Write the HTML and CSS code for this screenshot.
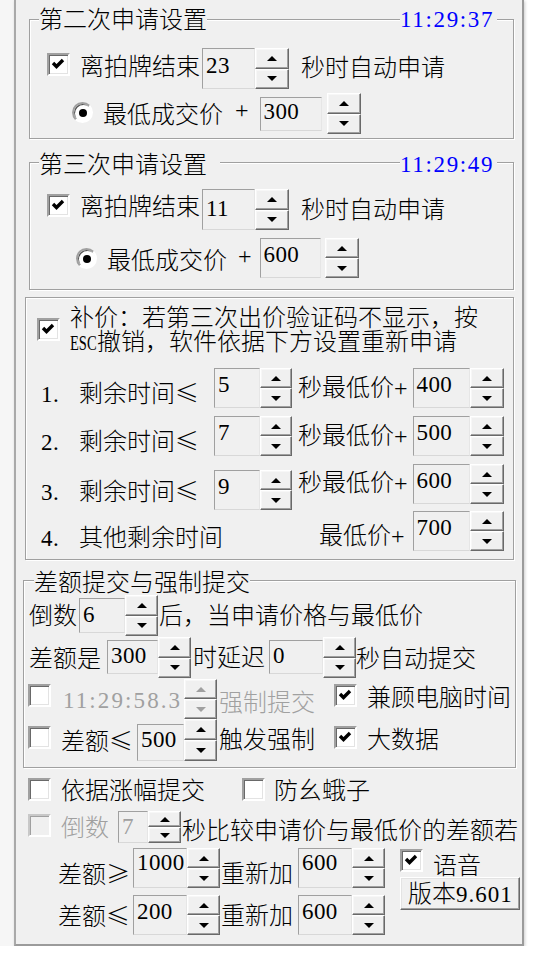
FILE: index.html
```html
<!DOCTYPE html>
<html lang="zh-CN">
<head>
<meta charset="utf-8">
<title>申请设置</title>
<link rel="stylesheet" href="styles.css">
</head>
<body>
<div class="win">
  <section class="grp g1">
    <div class="gh"><span class="gt">第二次申请设置</span><span class="gtime">11:29:37</span></div>
    <div class="row ra g1a">
      <span class="cb"><svg viewBox="0 0 19 19"><polyline points="4,8 7.5,11.5 14,5"/></svg></span>
      <span class="t la">离拍牌结束</span>
      <span class="ed">23</span>
      <span class="sp"><i class="u"></i><i class="d"></i></span>
      <span class="t lb">秒时自动申请</span>
    </div>
    <div class="row rb g1b">
      <span class="rd"></span>
      <span class="t la">最低成交价</span>
      <span class="t plus">+</span>
      <span class="ed">300</span>
      <span class="sp"><i class="u"></i><i class="d"></i></span>
    </div>
  </section>

  <section class="grp g2">
    <div class="gh"><span class="gt">第三次申请设置</span><span class="gtime">11:29:49</span></div>
    <div class="row ra g2a">
      <span class="cb"><svg viewBox="0 0 19 19"><polyline points="4,8 7.5,11.5 14,5"/></svg></span>
      <span class="t la">离拍牌结束</span>
      <span class="ed">11</span>
      <span class="sp"><i class="u"></i><i class="d"></i></span>
      <span class="t lb">秒时自动申请</span>
    </div>
    <div class="row rb g2b">
      <span class="rd"></span>
      <span class="t la">最低成交价</span>
      <span class="t plus">+</span>
      <span class="ed">600</span>
      <span class="sp"><i class="u"></i><i class="d"></i></span>
    </div>
  </section>

  <section class="grp g3">
    <div class="row g3a">
      <span class="cb"><svg viewBox="0 0 19 19"><polyline points="4,8 7.5,11.5 14,5"/></svg></span>
      <div class="txt"><div class="t">补价：若第三次出价验证码不显示，按</div><div class="t"><span class="esc">ESC</span>撤销，软件依据下方设置重新申请</div></div>
    </div>
    <div class="row lr l1">
      <span class="t lbl"><span class="num">1.</span>剩余时间<span class="le">≤</span></span>
      <span class="ed e1">5</span>
      <span class="sp s1"><i class="u"></i><i class="d"></i></span>
      <span class="t lb">秒最低价+</span>
      <span class="ed e2">400</span>
      <span class="sp s2"><i class="u"></i><i class="d"></i></span>
    </div>
    <div class="row lr l2">
      <span class="t lbl"><span class="num">2.</span>剩余时间<span class="le">≤</span></span>
      <span class="ed e1">7</span>
      <span class="sp s1"><i class="u"></i><i class="d"></i></span>
      <span class="t lb">秒最低价+</span>
      <span class="ed e2">500</span>
      <span class="sp s2"><i class="u"></i><i class="d"></i></span>
    </div>
    <div class="row lr l3">
      <span class="t lbl"><span class="num">3.</span>剩余时间<span class="le">≤</span></span>
      <span class="ed e1">9</span>
      <span class="sp s1"><i class="u"></i><i class="d"></i></span>
      <span class="t lb">秒最低价+</span>
      <span class="ed e2">600</span>
      <span class="sp s2"><i class="u"></i><i class="d"></i></span>
    </div>
    <div class="row lr l4">
      <span class="t lbl"><span class="num">4.</span>其他剩余时间</span>
      <span class="t lb">最低价+</span>
      <span class="ed e2">700</span>
      <span class="sp s2"><i class="u"></i><i class="d"></i></span>
    </div>
  </section>

  <section class="grp g4">
    <div class="gh"><span class="gt">差额提交与强制提交</span></div>
    <div class="row g4a">
      <span class="t ta">倒数</span>
      <span class="ed ea">6</span>
      <span class="sp sa"><i class="u"></i><i class="d"></i></span>
      <span class="t tb">后，当申请价格与最低价</span>
    </div>
    <div class="row g4b">
      <span class="t ta">差额是</span>
      <span class="ed ea">300</span>
      <span class="sp sa"><i class="u"></i><i class="d"></i></span>
      <span class="t tb">时延迟</span>
      <span class="ed eb">0</span>
      <span class="sp sb"><i class="u"></i><i class="d"></i></span>
      <span class="t tc">秒自动提交</span>
    </div>
    <div class="row g4c">
      <span class="cb c1"></span>
      <span class="tm dis">11:29:58.3</span>
      <span class="sp sa off"><i class="u"></i><i class="d"></i></span>
      <span class="t ta dis">强制提交</span>
      <span class="cb c2"><svg viewBox="0 0 19 19"><polyline points="4,8 7.5,11.5 14,5"/></svg></span>
      <span class="t tb">兼顾电脑时间</span>
    </div>
    <div class="row g4d">
      <span class="cb c1"></span>
      <span class="t tx">差额<span class="le">≤</span></span>
      <span class="ed ea">500</span>
      <span class="sp sa"><i class="u"></i><i class="d"></i></span>
      <span class="t ta">触发强制</span>
      <span class="cb c2"><svg viewBox="0 0 19 19"><polyline points="4,8 7.5,11.5 14,5"/></svg></span>
      <span class="t tb">大数据</span>
    </div>
  </section>

  <div class="row rp">
    <span class="cb c1"></span>
    <span class="t ta">依据涨幅提交</span>
    <span class="cb c2"></span>
    <span class="t tb">防幺蛾子</span>
  </div>
  <div class="row rq">
    <span class="cb off"></span>
    <span class="t ta dis">倒数</span>
    <span class="ed dis">7</span>
    <span class="sp"><i class="u"></i><i class="d"></i></span>
    <span class="t tb">秒比较申请价与最低价的差额若</span>
  </div>
  <div class="bottom">
    <div class="bcol">
      <div class="row rr">
        <span class="t ta">差额<span class="le">≥</span></span>
        <span class="ed ea">1000</span>
        <span class="sp"><i class="u"></i><i class="d"></i></span>
        <span class="t tb">重新加</span>
        <span class="ed eb">600</span>
        <span class="sp"><i class="u"></i><i class="d"></i></span>
      </div>
      <div class="row rs">
        <span class="t ta">差额<span class="le">≤</span></span>
        <span class="ed ea">200</span>
        <span class="sp"><i class="u"></i><i class="d"></i></span>
        <span class="t tb">重新加</span>
        <span class="ed eb">600</span>
        <span class="sp"><i class="u"></i><i class="d"></i></span>
      </div>
    </div>
    <div class="rcol">
      <div class="row rv">
        <span class="cb"><svg viewBox="0 0 19 19"><polyline points="4,8 7.5,11.5 14,5"/></svg></span>
        <span class="t">语音</span>
      </div>
      <div class="btn">版本<span class="ver">9.601</span></div>
    </div>
  </div>
</div>
</body>
</html>
```

FILE: styles.css
```css
*{box-sizing:border-box;margin:0;padding:0}
html,body{background:#fff}
body{background:linear-gradient(to right,#f6f6f6 14px,#fff 14px);font-family:"Liberation Serif","Noto Sans CJK SC",serif;font-size:24px;line-height:24px;font-weight:300;color:#000;overflow:hidden}

.win{margin-left:14px;width:510px;height:946px;background:#f0f0f0;border-left:2px solid #a9a9a9;border-right:2px solid #9b9b9b;border-bottom:2px solid #9b9b9b;box-shadow:1px 1px 3px rgba(0,0,0,.2);overflow:hidden}

/* group boxes */
.grp{border:1px solid #a0a0a0;box-shadow:inset 1px 1px #fff,1px 1px #fff}
.gh{display:flex;height:24px}
.gt{margin-left:9px;background:#f0f0f0;white-space:nowrap}
.gtime{margin-left:auto;margin-right:16px;width:97px;background:#f0f0f0;color:#0000ff;font-size:23px;letter-spacing:1.65px;white-space:nowrap}

.row{display:flex;align-items:flex-start}
.row>*{flex:none}
.t{white-space:nowrap}
.dis{color:#a0a0a0}
.le{display:inline-block;width:24px;text-align:center;font-family:"Noto Sans CJK SC",sans-serif}

/* controls */
.cb{display:flex;align-items:center;justify-content:center;width:23px;height:23px;background:#fff;border:2px solid;border-color:#a0a0a0 #fff #fff #a0a0a0;box-shadow:inset 1px 1px #696969,inset -1px -1px #e3e3e3}
.cb svg{width:19px;height:19px}
.cb polyline{fill:none;stroke:#000;stroke-width:3.4}
.cb.off{background:#f0f0f0;border-color:#c8c8c8 #fff #fff #c8c8c8;box-shadow:inset 1px 1px #a0a0a0}

.rd{display:flex;align-items:center;justify-content:center;width:21px;height:21px;border-radius:50%;background:#fff;border:2px solid;border-color:#a0a0a0 #fff #fff #a0a0a0;box-shadow:inset 1px 1px #555}
.rd::after{content:"";width:8px;height:8px;border-radius:50%;background:#000}

.ed{border:1px solid;border-color:#a0a0a0 #e6e6e6 #d8d8d8 #a0a0a0;background:#f0f0f0;font-size:23px;letter-spacing:.4px;line-height:24px;padding-left:3px;white-space:nowrap}

.sp{display:flex;flex-direction:column;width:34px}
.sp i{flex:1;display:flex;align-items:center;justify-content:center;border:1px solid;border-color:#fff #696969 #696969 #fff;box-shadow:inset -1px -1px #a0a0a0,inset 1px 1px #f7f7f7;background:#f0f0f0}
.sp i::before{content:"";border-left:5px solid transparent;border-right:5px solid transparent}
.sp .u::before{border-bottom:5px solid #000}
.sp .d::before{border-top:5px solid #000}
.sp.off .u::before{border-bottom-color:#a0a0a0}
.sp.off .d::before{border-top-color:#a0a0a0}

.btn{width:120px;height:33px;padding:4px 0 0 7px;white-space:nowrap;border:1px solid;border-color:#fff #696969 #696969 #fff;box-shadow:inset -1px -1px #a0a0a0,inset 1px 1px #e3e3e3;background:#f0f0f0}
.ver{font-size:23px;letter-spacing:1px}

/* group 1 */
.g1{margin:19px 0 0 13px;width:485px;padding-bottom:4px}
.g1 .gh{margin-top:-12px}
.g1a{margin-top:16px}
.g1a .cb{margin:5px 0 0 17px}
.g1a .la{margin:7px 0 0 10px}
.g1a .ed{margin-left:2px;width:53px;height:41px;padding-top:5px}
.g1a .sp{height:41px}
.g1a .lb{margin:8px 0 0 12px}
.g1b{margin-top:4px}
.g1b .rd{margin:9px 0 0 42px}
.g1b .la{margin:10px 0 0 10px}
.g1b .plus{margin:5px 0 0 12px}
.g1b .ed{margin:4px 0 0 11px;width:62px;height:34px;padding-top:2px}
.g1b .sp{margin-left:5px;height:41px}

/* group 2 */
.g2{margin:23px 0 0 13px;width:485px;padding-bottom:11px}
.g2 .gh{margin-top:-10px}
.g2 .gt{padding-right:13px}
.g2a{margin-top:12px}
.g2a .cb{margin:5px 0 0 17px}
.g2a .la{margin:6px 0 0 10px}
.g2a .ed{margin-left:2px;width:53px;height:41px;padding-top:7px}
.g2a .sp{height:41px}
.g2a .lb{margin:9px 0 0 12px}
.g2b{margin-top:8px}
.g2b .rd{margin:10px 0 0 46px}
.g2b .la{margin:11px 0 0 10px}
.g2b .plus{margin:6px 0 0 11px}
.g2b .ed{margin-left:8px;width:61px;height:40px;padding-top:4px}
.g2b .sp{margin-left:4px;height:40px}

/* group 3 */
.g3{margin:7px 0 0 9px;width:489px;padding-bottom:8px}
.g3a{margin-top:8px}
.g3a .cb{margin:12px 0 0 11px}
.txt{margin-left:10px;line-height:24px}
.esc{display:inline-block;width:27px;font-size:22px;transform:scaleX(.66);transform-origin:0 0}
.lr .lbl{margin:12px 0 0 15px}
.num{display:inline-block;width:38px;font-size:23px;letter-spacing:.5px}
.lr .e1{margin-left:15px;width:46px;height:40px;padding-top:4px}
.lr .s1{width:32px;height:40px}
.lr .lb{margin:8px 0 0 6px}
.lr .e2{margin-left:5px;width:57px;height:40px;padding-top:4px}
.lr .s2{width:34px;height:40px}
.l1{margin-top:13px}
.l2{margin-top:8px}
.l3{margin-top:8px}
.l3 .lbl{margin-top:14px}
.l3 .e1,.l3 .s1{margin-top:6px}
.l3 .lb{margin-top:7px}
.l4{margin-top:1px}
.l4 .lbl{margin-top:15px}
.l4 .lb{margin:13px 0 0 96px}
.l4 .e2{margin-left:8px}

/* group 4 */
.g4{margin:20px 0 0 7px;width:493px;padding-bottom:6px}
.g4 .gh{margin-top:-10px}
.g4 .gt{margin-left:10px}
.g4a .ta{margin:9px 0 0 5px}
.g4a .ea{margin:3px 0 0 2px;width:46px;height:35px;padding-top:4px}
.g4a .sa{width:33px;height:41px}
.g4a .tb{margin:9px 0 0 1px}
.g4b{margin-top:1px}
.g4b .ta{margin:10px 0 0 5px}
.g4b .ea{margin:3px 0 0 6px;width:51px;height:34px;padding-top:3px}
.g4b .sa{width:33px;height:41px}
.g4b .tb{margin:9px 0 0 2px}
.g4b .eb{margin:3px 0 0 4px;width:54px;height:34px;padding-top:3px}
.g4b .sb{width:33px;height:41px}
.g4b .tc{margin-top:10px}
.g4c{margin-top:1px}
.g4c .c1{margin:5px 0 0 4px}
.tm{margin:10px 0 0 12px;width:121px;font-size:23px;letter-spacing:2.1px;white-space:nowrap}
.g4c .sa{width:33px;height:40px}
.g4c .ta{margin:12px 0 0 2px}
.g4c .c2{margin:5px 0 0 19px}
.g4c .tb{margin:7px 0 0 10px}
.g4d .c1{margin:7px 0 0 4px}
.g4d .tx{margin:9px 0 0 10px}
.g4d .ea{margin:5px 0 0 4px;width:47px;height:37px;padding-top:3px}
.g4d .sa{width:33px;height:42px}
.g4d .ta{margin:9px 0 0 2px}
.g4d .c2{margin:7px 0 0 19px}
.g4d .tb{margin:9px 0 0 10px}

/* lower area */
.rp{margin-top:10px;height:24px}
.rp .c1{margin-left:12px}
.rp .ta{margin:1px 0 0 10px}
.rp .c2{margin-left:37px}
.rp .tb{margin:1px 0 0 9px}
.rq{margin-top:9px}
.rq .cb{margin:3px 0 0 12px}
.rq .ta{margin:5px 0 0 10px}
.rq .ed{margin-left:9px;width:30px;height:32px;padding-top:3px}
.rq .sp{width:33px;height:32px}
.rq .tb{margin:8px 0 0 1px}

.bottom{display:flex;margin-top:5px}
.bcol .ed{height:40px}
.bcol .sp{width:33px;height:40px}
.bcol .ea{margin-left:3px;width:54px}
.bcol .eb{margin-left:5px;width:54px}
.rr .ta{margin:13px 0 0 42px}
.rr .tb{margin:14px 0 0 1px}
.rr .ed{padding-top:2px}
.rs{margin-top:7px}
.rs .ta{margin:8px 0 0 42px}
.rs .tb{margin:9px 0 0 1px}
.rs .ed{padding-top:4px}
.rcol{margin-left:15px}
.rv{height:29px}
.rv .cb{margin-top:1px}
.rv .t{margin:6px 0 0 10px}
```
